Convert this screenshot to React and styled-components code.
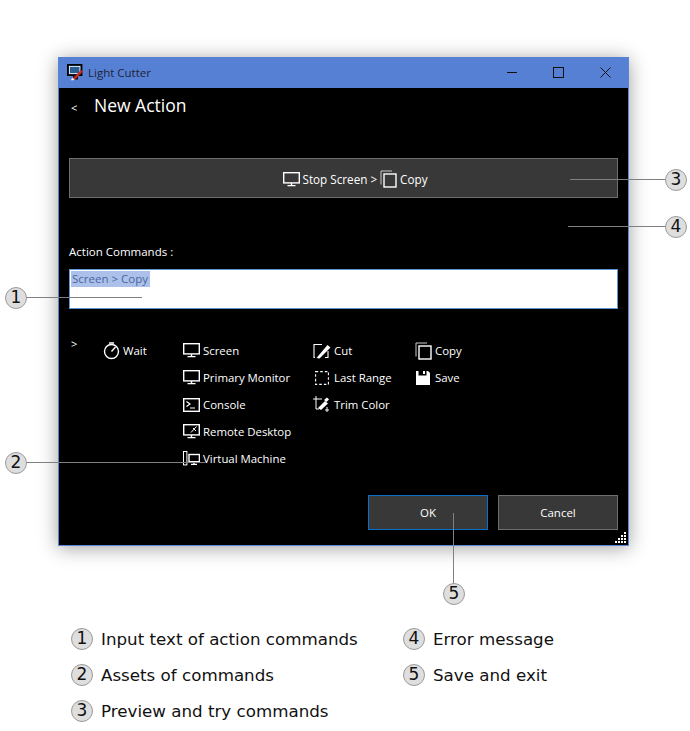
import React from "react";
import styled, { createGlobalStyle } from "styled-components";

const Global = createGlobalStyle`
  html, body { margin: 0; padding: 0; background: #fff; }
  body { font-family: "Open Sans", "Noto Sans", sans-serif; overflow: hidden; }
`;

const Page = styled.div`
  position: relative;
  width: 690px;
  height: 731px;
  padding-top: 57px;
  box-sizing: border-box;
`;

const Window = styled.div`
  width: 571px;
  height: 489px;
  margin-left: 58px;
  box-sizing: border-box;
  background: #000;
  border: 1px solid #5a85d6;
  border-top: 0;
  box-shadow: 0 2px 18px rgba(0, 0, 0, 0.38);
  display: flex;
  flex-direction: column;
  position: relative;
`;

const TitleBar = styled.div`
  height: 31px;
  flex: none;
  background: #5680d4;
  display: flex;
  align-items: center;
  padding-left: 8px;
  color: #1c2438;
  font-size: 11.5px;
`;

const AppTitle = styled.span`
  margin-left: 4px;
  flex: 1;
`;

const WinButton = styled.div`
  width: 46px;
  height: 31px;
  display: flex;
  align-items: center;
  justify-content: center;
  position: relative;
  left: ${(p) => p.$shift || 0}px;
`;

const Body = styled.div`
  flex: 1;
  display: flex;
  flex-direction: column;
  padding: 0 10px;
  color: #fff;
`;

const Header = styled.div`
  height: 70px;
  display: flex;
  align-items: flex-start;
  padding-left: 2px;
`;

const Chevron = styled.span`
  font-size: 11px;
  line-height: 14px;
  width: 23px;
  margin-top: ${(p) => p.$top}px;
  flex: none;
`;

const Heading = styled.h1`
  margin: 5px 0 0;
  font-size: 17.5px;
  line-height: 24px;
  font-weight: 400;
`;

const Preview = styled.div`
  height: 40px;
  box-sizing: border-box;
  background: #383838;
  border: 1px solid #6e6e6e;
  display: flex;
  align-items: center;
  justify-content: center;
  font-size: 11.7px;
  padding: 2px 0 0 23px;
`;

const PreviewText = styled.span`
  margin: 0 ${(p) => p.$right}px 0 ${(p) => p.$left}px;
`;

const Label = styled.div`
  margin-top: 45px;
  height: 17px;
  font-size: 11.5px;
  line-height: 17px;
`;

const Input = styled.div`
  height: 40px;
  margin-top: 9px;
  box-sizing: border-box;
  background: #fff;
  border: 1px solid #5d96d6;
  padding: 1px 0 0 1px;
  font-size: 11.5px;
  line-height: 16px;
`;

const Selected = styled.span`
  display: inline-block;
  background: #adc0ea;
  color: #45689f;
  padding: 0 2px 0 1px;
`;

const Assets = styled.div`
  margin-top: 28px;
  display: flex;
  align-items: flex-start;
  padding-left: 2px;
`;

const Column = styled.div`
  width: ${(p) => p.$w}px;
  flex: none;
  display: flex;
  flex-direction: column;
`;

const Asset = styled.div`
  height: 27px;
  display: flex;
  align-items: center;
  gap: 3px;
  font-size: 11.4px;
  white-space: nowrap;
`;

const IconSlot = styled.span`
  width: ${(p) => p.$w || 17}px;
  height: 18px;
  flex: none;
  display: flex;
  align-items: center;
  justify-content: center;
`;

const Footer = styled.div`
  margin-top: auto;
  padding-bottom: 15px;
  display: flex;
  justify-content: flex-end;
  gap: 10px;
`;

const Button = styled.div`
  width: 120px;
  height: 35px;
  box-sizing: border-box;
  background: #383838;
  border: 1px solid ${(p) => (p.$primary ? "#0a6fc8" : "#6e6e6e")};
  display: flex;
  align-items: center;
  justify-content: center;
  font-size: 11.5px;
`;

const Grip = styled.svg`
  position: absolute;
  right: 1px;
  bottom: 1px;
`;

const Badge = styled.span`
  width: 22px;
  height: 22px;
  box-sizing: border-box;
  flex: none;
  border-radius: 50%;
  background: #dedede;
  border: 1.5px solid #9a9a9a;
  color: #111;
  font-family: "DejaVu Sans", sans-serif;
  font-size: 17px;
  line-height: 19px;
  text-align: center;
`;

const Marker = styled(Badge)`
  position: absolute;
  left: ${(p) => p.$x - 10}px;
  top: ${(p) => p.$y - 10}px;
`;

const Leader = styled.div`
  position: absolute;
  left: ${(p) => p.$x}px;
  top: ${(p) => p.$y}px;
  width: ${(p) => p.$w || 1}px;
  height: ${(p) => p.$h || 1}px;
  background: #808080;
`;

const Legend = styled.div`
  margin: 82px 0 0 71px;
  display: grid;
  grid-template-columns: 332px auto;
  grid-auto-rows: 36px;
`;

const LegendItem = styled.div`
  display: flex;
  align-items: flex-start;
  gap: 8px;
  font-family: "DejaVu Sans", sans-serif;
  font-size: 16.7px;
  line-height: 22px;
  color: #111;
`;

const s = { fill: "none", stroke: "#fff", strokeWidth: 1.4 };

const Monitor = ({ x }) => (
  <svg width="17" height="15" viewBox="0 0 17 15">
    <rect x="0.7" y="0.7" width="15.6" height="10.2" {...s} />
    <path d="M8.5 11v2.4M4.5 13.6h8" {...s} />
    {x && <path d="M8 8.5l5.5-6M10 4l3 3" stroke="#fff" strokeWidth="1" />}
  </svg>
);

const Console = () => (
  <svg width="17" height="14" viewBox="0 0 17 14">
    <rect x="0.7" y="0.7" width="15.6" height="12.6" {...s} />
    <path d="M3.5 3.5l3.5 2.5-3.5 2.5M7 10h5" {...s} strokeWidth="1.2" />
  </svg>
);

const VM = () => (
  <svg width="17" height="15" viewBox="0 0 17 15">
    <rect x="0.5" y="0.5" width="3.4" height="13.4" fill="none" stroke="#fff" />
    <rect x="6" y="3.5" width="10.4" height="7.2" {...s} />
    <path d="M11 11v2M8 13.4h6" {...s} />
  </svg>
);

const Timer = () => (
  <svg width="17" height="18" viewBox="0 0 17 18">
    <circle cx="8.5" cy="9.5" r="7" {...s} />
    <path d="M6 1h5M8.5 9.5L12.5 5" {...s} />
  </svg>
);

const Cut = () => (
  <svg width="18" height="16" viewBox="0 0 18 16">
    <path d="M9 1.5H1v13h1M15 8v6.5h-3" {...s} strokeWidth="1.1" />
    <path d="M3.5 15L14.5 2l3 2.5L6.5 15.5z" fill="#fff" />
  </svg>
);

const Range = () => (
  <svg width="14" height="14" viewBox="0 0 14 14">
    <rect x="0.6" y="0.6" width="12.8" height="12.8" fill="none" stroke="#fff" strokeWidth="1.1" strokeDasharray="2.6 2" />
  </svg>
);

const Trim = () => (
  <svg width="18" height="17" viewBox="0 0 18 17">
    <path d="M3 0v13h3M0 3h9M14 11v5M12 14h4" {...s} strokeWidth="1" />
    <path d="M5 12l7-7 3 2.5L8 14z" fill="#fff" />
    <path d="M11 4l3-2.5 2 2L13.5 6" fill="#fff" />
  </svg>
);

const Copy = () => (
  <svg width="17" height="18" viewBox="0 0 17 18">
    <path d="M1 14.5V1h11" fill="none" stroke="#ccc" strokeWidth="1" />
    <rect x="4" y="4" width="12" height="13" {...s} />
  </svg>
);

const Save = () => (
  <svg width="14" height="14" viewBox="0 0 14 14">
    <path d="M0 0h2.5v4.5h8V0H12l2 2v12H0z" fill="#fff" />
    <rect x="7" y="0" width="2" height="3" fill="#fff" />
  </svg>
);

const AppIcon = () => (
  <svg width="17" height="17" viewBox="0 0 17 17">
    <rect x="0.7" y="0.7" width="14" height="10.6" fill="#16324f" stroke="#000" strokeWidth="1.4" />
    <rect x="2.5" y="2.5" width="10.4" height="7" fill="#2b5e93" stroke="#fff" strokeWidth="0.8" />
    <path d="M6 11.5h5v4H6z" fill="#111" />
    <path d="M5.5 14.5L14 6l2 1.6-8 8z" fill="#c8281e" />
    <path d="M3.6 16.2l2-2.4 2 1.6-1 .9z" fill="#eee" />
  </svg>
);

const AssetItem = ({ icon, w, children }) => (
  <Asset>
    <IconSlot $w={w}>{icon}</IconSlot>
    <span>{children}</span>
  </Asset>
);

export default function App() {
  return (
    <Page>
      <Global />
      <Window>
        <TitleBar>
          <AppIcon />
          <AppTitle>Light Cutter</AppTitle>
          <WinButton $shift={-1}>
            <svg width="11" height="11" viewBox="0 0 11 11"><path d="M0 5.5h10" stroke="#111" strokeWidth="1" /></svg>
          </WinButton>
          <WinButton $shift={-1}>
            <svg width="11" height="11" viewBox="0 0 11 11"><rect x="0.5" y="0.5" width="10" height="10" fill="none" stroke="#111" /></svg>
          </WinButton>
          <WinButton>
            <svg width="11" height="11" viewBox="0 0 11 11"><path d="M0.5 0.5l10 10M10.5 0.5l-10 10" stroke="#111" strokeWidth="1" /></svg>
          </WinButton>
        </TitleBar>
        <Body>
          <Header>
            <Chevron $top={13}>&lt;</Chevron>
            <Heading>New Action</Heading>
          </Header>
          <Preview>
            <Monitor />
            <PreviewText $left={3} $right={3}>Stop Screen &gt;</PreviewText>
            <Copy />
            <PreviewText $left={3} $right={0}>Copy</PreviewText>
          </Preview>
          <Label>Action Commands :</Label>
          <Input><Selected>Screen &gt; Copy</Selected></Input>
          <Assets>
            <Column $w={32}><Chevron $top={0}>&gt;</Chevron></Column>
            <Column $w={80}>
              <AssetItem icon={<Timer />}>Wait</AssetItem>
            </Column>
            <Column $w={129}>
              <AssetItem icon={<Monitor />}>Screen</AssetItem>
              <AssetItem icon={<Monitor />}>Primary Monitor</AssetItem>
              <AssetItem icon={<Console />}>Console</AssetItem>
              <AssetItem icon={<Monitor x />}>Remote Desktop</AssetItem>
              <AssetItem icon={<VM />}>Virtual Machine</AssetItem>
            </Column>
            <Column $w={102}>
              <AssetItem w={19} icon={<Cut />}>Cut</AssetItem>
              <AssetItem w={19} icon={<Range />}>Last Range</AssetItem>
              <AssetItem w={19} icon={<Trim />}>Trim Color</AssetItem>
            </Column>
            <Column $w={80}>
              <AssetItem w={18} icon={<Copy />}>Copy</AssetItem>
              <AssetItem w={18} icon={<Save />}>Save</AssetItem>
            </Column>
          </Assets>
          <Footer>
            <Button $primary>OK</Button>
            <Button>Cancel</Button>
          </Footer>
        </Body>
        <Grip width="12" height="12" viewBox="0 0 12 12" fill="#fff">
          <rect x="9" y="0" width="2" height="2" />
          <rect x="6" y="3" width="2" height="2" /><rect x="9" y="3" width="2" height="2" />
          <rect x="3" y="6" width="2" height="2" /><rect x="6" y="6" width="2" height="2" /><rect x="9" y="6" width="2" height="2" />
          <rect x="0" y="9" width="2" height="2" /><rect x="3" y="9" width="2" height="2" /><rect x="6" y="9" width="2" height="2" /><rect x="9" y="9" width="2" height="2" />
        </Grip>
      </Window>

      <Legend>
        <LegendItem><Badge>1</Badge>Input text of action commands</LegendItem>
        <LegendItem><Badge>4</Badge>Error message</LegendItem>
        <LegendItem><Badge>2</Badge>Assets of commands</LegendItem>
        <LegendItem><Badge>5</Badge>Save and exit</LegendItem>
        <LegendItem><Badge>3</Badge>Preview and try commands</LegendItem>
      </Legend>

      <Leader $x={25} $y={297} $w={117} />
      <Marker $x={15} $y={297}>1</Marker>
      <Leader $x={25} $y={462} $w={180} />
      <Marker $x={15} $y={462}>2</Marker>
      <Leader $x={570} $y={179} $w={96} />
      <Marker $x={675} $y={179}>3</Marker>
      <Leader $x={568} $y={226} $w={98} />
      <Marker $x={675} $y={226}>4</Marker>
      <Leader $x={453} $y={513} $h={71} />
      <Marker $x={453} $y={593}>5</Marker>
    </Page>
  );
}
